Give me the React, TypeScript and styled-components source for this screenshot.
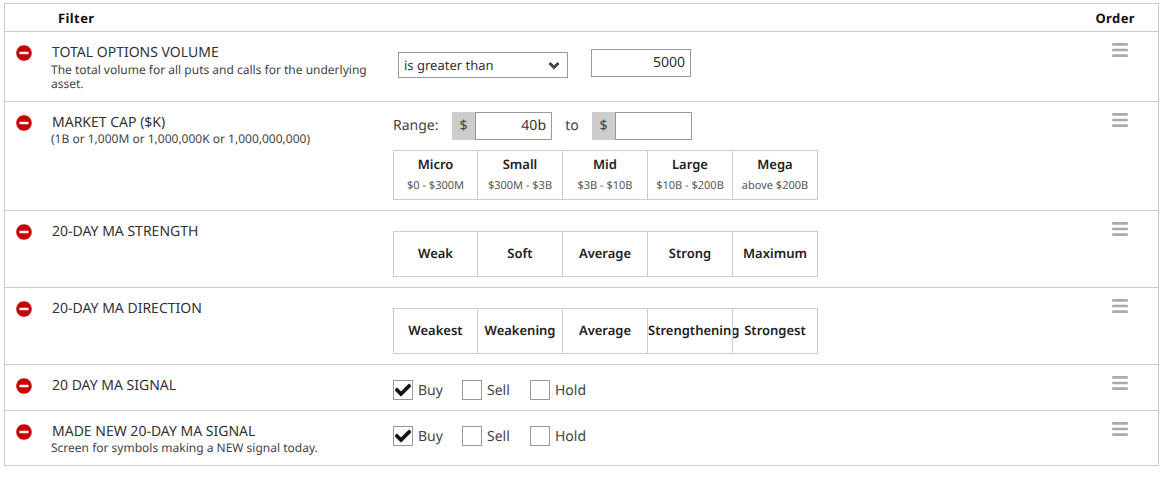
import styled, { createGlobalStyle } from "styled-components";
import { FaBars, FaCheck, FaMinusCircle } from "react-icons/fa";

const GlobalStyle = createGlobalStyle`
  body {
    margin: 0;
    background: #fff;
    font-family: "Noto Sans", "Open Sans", sans-serif;
    color: #333;
    text-rendering: geometricPrecision;
  }
`;

const Table = styled.div`
  margin: 3px 13px 0 4px;
  border: 1px solid #ccc;
`;

const HeaderRow = styled.div`
  display: flex;
  justify-content: space-between;
  height: 27px;
  padding: 0 23px 0 53px;
  line-height: 28px;
  font-size: 13px;
  font-weight: 700;
  color: #111;
  letter-spacing: 0.4px;
`;

const Row = styled.div<{ $height: number }>`
  display: grid;
  grid-template-columns: 47px 341px 1fr 47px;
  height: ${(p) => p.$height}px;
  border-top: 1px solid #ccc;
  box-sizing: border-box;
`;

const RemoveCell = styled.div`
  padding: 13px 0 0 11px;
  color: #c80000;
  font-size: 16px;
  line-height: 0;
`;

const InfoCell = styled.div`
  padding-top: 12px;
`;

const Title = styled.div`
  font-size: 14px;
  line-height: 18px;
  color: #333;
`;

const Description = styled.div<{ $gap: number }>`
  font-size: 12px;
  line-height: 14px;
  color: #444;
  margin: ${(p) => p.$gap}px 0 0 -1px;
  width: 325px;
`;

const Controls = styled.div<{ $top: number }>`
  padding-top: ${(p) => p.$top}px;
  font-size: 14px;
`;

const OrderCell = styled.div`
  padding-top: 9px;
  color: #aaa;
  font-size: 18px;
  line-height: 0;
`;

const FilterLine = styled.div`
  display: flex;
  align-items: flex-start;
  gap: 23px;
  margin-left: 5px;
`;

const SelectBox = styled.div`
  box-sizing: border-box;
  width: 170px;
  height: 26px;
  margin-top: 3px;
  padding: 0 7px 0 5px;
  display: flex;
  align-items: center;
  justify-content: space-between;
  border: 1px solid #999;
  font-size: 13px;
  color: #333;
`;

const ValueInput = styled.div<{ $width: number }>`
  box-sizing: border-box;
  width: ${(p) => p.$width}px;
  height: 28px;
  padding-right: 5px;
  border: 1px solid #999;
  text-align: right;
  font-size: 14px;
  line-height: 26px;
  color: #333;
`;

const RangeLine = styled.div`
  display: flex;
  align-items: center;
  height: 28px;
`;

const RangeLabel = styled.span<{ $width: number; $center?: boolean }>`
  width: ${(p) => p.$width}px;
  margin-top: -2px;
  text-align: ${(p) => (p.$center ? "center" : "left")};
  font-size: 14px;
  color: #444;
`;

const Addon = styled.span`
  box-sizing: border-box;
  width: 23px;
  height: 28px;
  background: #ccc;
  text-align: center;
  font-size: 14px;
  line-height: 27px;
  color: #444;
`;

const Segments = styled.div<{ $height: number; $top: number }>`
  display: grid;
  grid-template-columns: 83px 85px 85px 85px 85px;
  box-sizing: border-box;
  width: 425px;
  height: ${(p) => p.$height}px;
  margin-top: ${(p) => p.$top}px;
  border: 1px solid #ccc;
`;

const Segment = styled.div<{ $bottom: number }>`
  display: flex;
  flex-direction: column;
  justify-content: center;
  text-align: center;
  white-space: nowrap;
  padding-bottom: ${(p) => p.$bottom}px;
  & + & {
    border-left: 1px solid #ccc;
  }
`;

const SegmentName = styled.div`
  font-size: 13px;
  font-weight: 600;
  line-height: 18px;
  color: #222;
`;

const SegmentRange = styled.div`
  font-size: 11px;
  line-height: 16px;
  margin-top: 5px;
  color: #555;
`;

const Options = styled.div`
  display: flex;
  align-items: center;
`;

const CheckBox = styled.span`
  box-sizing: border-box;
  display: flex;
  align-items: center;
  justify-content: center;
  width: 20px;
  height: 20px;
  border: 1px solid #999;
  color: #111;
  font-size: 16px;
  svg {
    stroke: currentColor;
    stroke-width: 24px;
  }
`;

const OptionLabel = styled.span<{ $width: number }>`
  width: ${(p) => p.$width}px;
  padding-left: 5px;
  box-sizing: border-box;
  font-size: 14px;
  color: #444;
`;

const Chevron = () => (
  <svg width="12" height="9" viewBox="0 0 12 9">
    <polyline points="1.5,2 6,6.5 10.5,2" fill="none" stroke="#444" strokeWidth="3" />
  </svg>
);

const Remove = () => (
  <RemoveCell>
    <FaMinusCircle />
  </RemoveCell>
);

const Order = () => (
  <OrderCell>
    <FaBars />
  </OrderCell>
);

const CheckOptions = () => (
  <Options>
    <CheckBox>
      <FaCheck />
    </CheckBox>
    <OptionLabel $width={49}>Buy</OptionLabel>
    <CheckBox />
    <OptionLabel $width={48}>Sell</OptionLabel>
    <CheckBox />
    <OptionLabel $width={60}>Hold</OptionLabel>
  </Options>
);

const capRanges = [
  ["Micro", "$0 - $300M"],
  ["Small", "$300M - $3B"],
  ["Mid", "$3B - $10B"],
  ["Large", "$10B - $200B"],
  ["Mega", "above $200B"],
];

const App = () => {
  return (
    <>
      <GlobalStyle />
      <Table>
        <HeaderRow>
          <span>Filter</span>
          <span>Order</span>
        </HeaderRow>

        <Row $height={70}>
          <Remove />
          <InfoCell>
            <Title>TOTAL OPTIONS VOLUME</Title>
            <Description $gap={1}>
              The total volume for all puts and calls for the underlying asset.
            </Description>
          </InfoCell>
          <Controls $top={17}>
            <FilterLine>
              <SelectBox>
                is greater than
                <Chevron />
              </SelectBox>
              <ValueInput $width={100}>5000</ValueInput>
            </FilterLine>
          </Controls>
          <Order />
        </Row>

        <Row $height={109}>
          <Remove />
          <InfoCell>
            <Title>MARKET CAP ($K)</Title>
            <Description $gap={0}>(1B or 1,000M or 1,000,000K or 1,000,000,000)</Description>
          </InfoCell>
          <Controls $top={10}>
            <RangeLine>
              <RangeLabel $width={59}>Range:</RangeLabel>
              <Addon>$</Addon>
              <ValueInput $width={77}>40b</ValueInput>
              <RangeLabel $width={40} $center>
                to
              </RangeLabel>
              <Addon>$</Addon>
              <ValueInput $width={77} />
            </RangeLine>
            <Segments $height={50} $top={10}>
              {capRanges.map(([name, range]) => (
                <Segment key={name} $bottom={2}>
                  <SegmentName>{name}</SegmentName>
                  <SegmentRange>{range}</SegmentRange>
                </Segment>
              ))}
            </Segments>
          </Controls>
          <Order />
        </Row>

        <Row $height={77}>
          <Remove />
          <InfoCell>
            <Title>20-DAY MA STRENGTH</Title>
          </InfoCell>
          <Controls $top={20}>
            <Segments $height={46} $top={0}>
              {["Weak", "Soft", "Average", "Strong", "Maximum"].map((name) => (
                <Segment key={name} $bottom={2}>
                  <SegmentName>{name}</SegmentName>
                </Segment>
              ))}
            </Segments>
          </Controls>
          <Order />
        </Row>

        <Row $height={77}>
          <Remove />
          <InfoCell>
            <Title>20-DAY MA DIRECTION</Title>
          </InfoCell>
          <Controls $top={20}>
            <Segments $height={46} $top={0}>
              {["Weakest", "Weakening", "Average", "Strengthening", "Strongest"].map((name) => (
                <Segment key={name} $bottom={2}>
                  <SegmentName>{name}</SegmentName>
                </Segment>
              ))}
            </Segments>
          </Controls>
          <Order />
        </Row>

        <Row $height={46}>
          <Remove />
          <InfoCell>
            <Title>20 DAY MA SIGNAL</Title>
          </InfoCell>
          <Controls $top={15}>
            <CheckOptions />
          </Controls>
          <Order />
        </Row>

        <Row $height={55}>
          <Remove />
          <InfoCell>
            <Title>MADE NEW 20-DAY MA SIGNAL</Title>
            <Description $gap={0}>Screen for symbols making a NEW signal today.</Description>
          </InfoCell>
          <Controls $top={15}>
            <CheckOptions />
          </Controls>
          <Order />
        </Row>
      </Table>
    </>
  );
};

export default App;
